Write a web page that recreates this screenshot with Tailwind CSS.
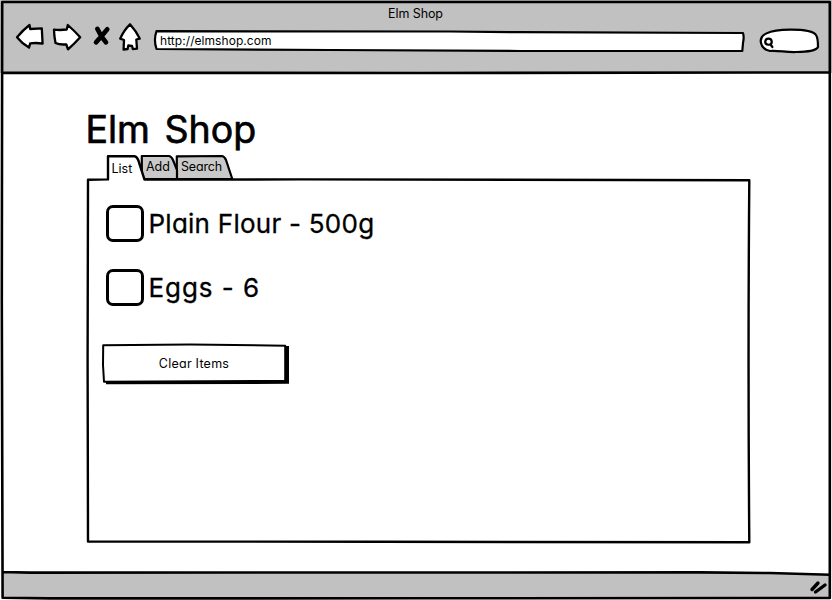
<!DOCTYPE html>
<html lang="en">
<head>
<meta charset="utf-8">
<title>Elm Shop</title>
<script src="https://cdn.jsdelivr.net/npm/@tailwindcss/browser@4"></script>
</head>
<body class="bg-white">
<div class="relative flex h-[600px] w-[832px] flex-col overflow-hidden bg-white text-black font-[Inter,'Noto_Sans',sans-serif] [font-feature-settings:'cv11']">
  <header class="h-[73px] shrink-0 bg-[#c1c1c1]">
    <h2 class="h-[23px] pt-[5px] pr-[1px] text-center text-[12.5px] leading-[17px]"><span class="tracking-[-0.1px]">Elm Shop</span></h2>
    <div class="flex h-[30px]">
      <svg class="ml-[14px] h-[30px] w-[32px]" viewBox="14 23 32 30" fill="#fff" stroke="#000" stroke-width="2.3" stroke-linejoin="round"><path d="M17 37.2Q23 30 29.5 25L30.2 29L41.8 28.3L42.6 43.6Q36 42.5 30.2 43.4L29 47.6Q22 43.5 17 37.2Z"/></svg>
      <svg class="ml-[6px] h-[30px] w-[32px]" viewBox="52 23 32 30" fill="#fff" stroke="#000" stroke-width="2.3" stroke-linejoin="round"><path d="M54 29.6Q60 30.4 66.7 29.5L67.8 25Q74 30.5 80.2 37.2Q74.5 43.5 68 49.3L66.3 44.3Q60 45 55.5 43L54.4 36Z"/></svg>
      <svg class="ml-[8px] h-[30px] w-[20px]" viewBox="92 23 20 30" fill="none" stroke="#000" stroke-width="4.6" stroke-linecap="round"><path d="M97.3 28.8Q101 37 106 42.4M107.3 29.2Q101 37 96 42.3"/></svg>
      <svg class="ml-[6px] h-[30px] w-[26px]" viewBox="118 23 26 30" fill="#fff" stroke="#000" stroke-width="2.3" stroke-linejoin="round"><path d="M130 24.3Q136 31 139.7 38.6L136.3 39.5L137 48.6L132.8 49L132 45.8L128.3 45.5L127.6 49L123.6 49.5L124 40L120.2 38.6Q124 30 130 24.3Z"/></svg>
      <div class="relative ml-[8px] h-[30px] w-[596px]">
        <svg class="absolute inset-0" width="596" height="30" viewBox="152 23 596 30" fill="#fff" stroke="#000" stroke-width="2.2" stroke-linejoin="round"><path d="M156.5 31.2L450 31.5L520 32.2L743 33Q744.3 37 743 43L742.3 51L520 51L330 50L156.5 49Q153.4 40 156.5 31.2Z"/></svg>
        <span class="absolute left-[8px] top-[9px] text-[12px] leading-[17px] tracking-[0.06px]">http://elmshop.com</span>
      </div>
      <svg class="ml-[8px] h-[32px] w-[68px] shrink-0" viewBox="756 23 68 32" fill="#fff" stroke="#000" stroke-width="2.2" stroke-linecap="round"><path d="M761 43C759 35 768 29.8 790 29.6C806 29.5 814 32 816 35C818 38 818 42 818 47C816 51 808 51.8 796 52C785 52.3 780 50.5 770 51C765 50 762 48 761 43Z"/><path d="M771.8 41.8C771.5 46 765.2 45.5 765.2 41.8C765.5 37.5 771.5 37.5 771.8 41.8ZM770.5 44.5L772.4 47"/></svg>
    </div>
  </header>

  <main class="h-[499px] shrink-0 pt-[33px]">
    <h1 class="h-[46px] pl-[85.5px] text-[37.5px] leading-[47px] whitespace-nowrap [-webkit-text-stroke:0.7px_#000] [word-spacing:4px]">Elm Shop</h1>
    <section class="relative ml-[84px] h-[394px] w-[670px]">
      <svg class="absolute inset-0" width="670" height="394" viewBox="84 152 670 394" fill="#fff" stroke="#000" stroke-width="2.2" stroke-linejoin="round" stroke-linecap="round">
        <path d="M176.8 179V156.3L222 156Q224.5 156.5 226 160L232.3 179Z" fill="#c9c9c9"/>
        <path d="M141.8 179V156L169 156Q171.5 156.5 173 160L177 170V179Z" fill="#c9c9c9"/>
        <path d="M88 179.6L108 179.4V156.2L134.5 156.2Q137 156.4 138.4 160.5L144.5 179.6L749.3 180.2L748.7 542.2L380 541.8L88 541.5Z" stroke="none"/>
        <path d="M749.3 180.3Q747.8 360 749.3 542.3L380 541.8L88 541.5L87.6 360L88 179.8L108 179.4V156.2L134.5 156.2Q137 156.4 138.4 160.5L144.5 179.6L300 179.4L749.3 180.3" stroke-width="2.4" fill="none"/>
      </svg>
      <nav class="relative flex h-[28px] text-[12.5px] leading-[16px]">
        <span class="ml-[27.5px] w-[34.5px] pt-[9px]">List</span>
        <span class="w-[35px] pt-[7px]">Add</span>
        <span class="pt-[7px] tracking-[-0.15px]">Search</span>
      </nav>
      <ul class="relative pl-[22px] pt-[25px]">
        <li class="flex h-[64px] items-start">
          <span class="h-[37px] w-[38px] rounded-[7px] border-[3px] border-black bg-white"></span>
          <span class="ml-[4.5px] text-[26px] leading-[37px] tracking-[0.25px] whitespace-nowrap [-webkit-text-stroke:0.3px_#000]">Plain Flour - 500g</span>
        </li>
        <li class="flex h-[64px] items-start">
          <span class="h-[37px] w-[38px] rounded-[7px] border-[3px] border-black bg-white"></span>
          <span class="ml-[4.5px] text-[26px] leading-[37px] tracking-[0.95px] whitespace-nowrap [-webkit-text-stroke:0.3px_#000]">Eggs - 6</span>
        </li>
      </ul>
      <button class="relative ml-[16px] mt-[9px] block h-[46px] w-[192px]">
        <svg class="absolute inset-0" width="192" height="46" viewBox="100 342 192 46"><path d="M106 380V384.3L289 383.8V346H285V380Z"/><path d="M103.2 345.2L190 344.6L285.2 345.7V380.8L104 381.7L103 365Z" fill="#fff" stroke="#000" stroke-width="2" stroke-linejoin="round"/></svg>
        <span class="absolute left-0 top-[13px] w-[188px] text-center text-[12.5px] leading-[17px] tracking-[0.25px]">Clear Items</span>
      </button>
    </section>
  </main>

  <footer class="h-[28px] shrink-0">
    <svg width="832" height="28" viewBox="0 572 832 28"><path d="M2 572H740L830 574V598H2Z" fill="#c1c1c1"/><path d="M812 589.5L818 583M815.5 592L825 585" stroke="#000" stroke-width="3.4" stroke-linecap="round"/></svg>
  </footer>

  <svg class="pointer-events-none absolute inset-0" width="832" height="600" viewBox="0 0 832 600" fill="none" stroke="#000" stroke-width="2.6" stroke-linejoin="round"><path d="M2.2 2H829.8V598L420 598.3L50 598.4L2.6 597.8L1.8 300ZM2 72.6L420 73L830 72.4M2 572L30 572.6L700 572.4L770 573L830 574.8"/></svg>
</div>
</body>
</html>
